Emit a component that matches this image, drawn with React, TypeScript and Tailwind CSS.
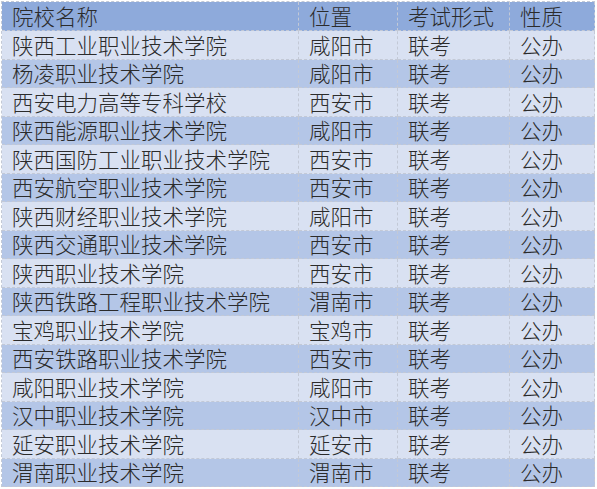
import React from "react";

type School = {
  name: string;
  city: string;
  exam: string;
  kind: string;
};

const schools: School[] = [
  { name: "陕西工业职业技术学院", city: "咸阳市", exam: "联考", kind: "公办" },
  { name: "杨凌职业技术学院", city: "咸阳市", exam: "联考", kind: "公办" },
  { name: "西安电力高等专科学校", city: "西安市", exam: "联考", kind: "公办" },
  { name: "陕西能源职业技术学院", city: "咸阳市", exam: "联考", kind: "公办" },
  { name: "陕西国防工业职业技术学院", city: "西安市", exam: "联考", kind: "公办" },
  { name: "西安航空职业技术学院", city: "西安市", exam: "联考", kind: "公办" },
  { name: "陕西财经职业技术学院", city: "咸阳市", exam: "联考", kind: "公办" },
  { name: "陕西交通职业技术学院", city: "西安市", exam: "联考", kind: "公办" },
  { name: "陕西职业技术学院", city: "西安市", exam: "联考", kind: "公办" },
  { name: "陕西铁路工程职业技术学院", city: "渭南市", exam: "联考", kind: "公办" },
  { name: "宝鸡职业技术学院", city: "宝鸡市", exam: "联考", kind: "公办" },
  { name: "西安铁路职业技术学院", city: "西安市", exam: "联考", kind: "公办" },
  { name: "咸阳职业技术学院", city: "咸阳市", exam: "联考", kind: "公办" },
  { name: "汉中职业技术学院", city: "汉中市", exam: "联考", kind: "公办" },
  { name: "延安职业技术学院", city: "延安市", exam: "联考", kind: "公办" },
  { name: "渭南职业技术学院", city: "渭南市", exam: "联考", kind: "公办" },
];

// dashed gridlines like the spreadsheet export
const cell =
  "flex items-center pl-[10px] border-r border-b border-dashed border-[#c3c9d6] whitespace-nowrap";

const App = () => {
  return (
    <div className="w-[597px] h-[489px] bg-white pt-[1px] pl-[1px] font-['Noto_Sans_CJK_SC','Noto_Sans',sans-serif] text-[21.5px] leading-[26px] text-[#2b2b2b] font-light">
      <div className="grid grid-cols-[297px_99px_112px_85px] w-fit border-t border-l border-dashed border-[#c3c9d6]">
        {/* Header */}
        <div className={`${cell} h-[29px] bg-[#8eaadb]`}>院校名称</div>
        <div className={`${cell} h-[29px] bg-[#8eaadb]`}>位置</div>
        <div className={`${cell} h-[29px] bg-[#8eaadb]`}>考试形式</div>
        <div className={`${cell} h-[29px] bg-[#8eaadb]`}>性质</div>

        {/* Rows */}
        {schools.map((s, i) => {
          const bg = i % 2 === 0 ? "bg-[#d9e1f2]" : "bg-[#b4c6e7]";
          return (
            <React.Fragment key={s.name}>
              <div className={`${cell} h-[28.5px] ${bg}`}>{s.name}</div>
              <div className={`${cell} h-[28.5px] ${bg}`}>{s.city}</div>
              <div className={`${cell} h-[28.5px] ${bg}`}>{s.exam}</div>
              <div className={`${cell} h-[28.5px] ${bg}`}>{s.kind}</div>
            </React.Fragment>
          );
        })}
      </div>
    </div>
  );
};

export default App;
